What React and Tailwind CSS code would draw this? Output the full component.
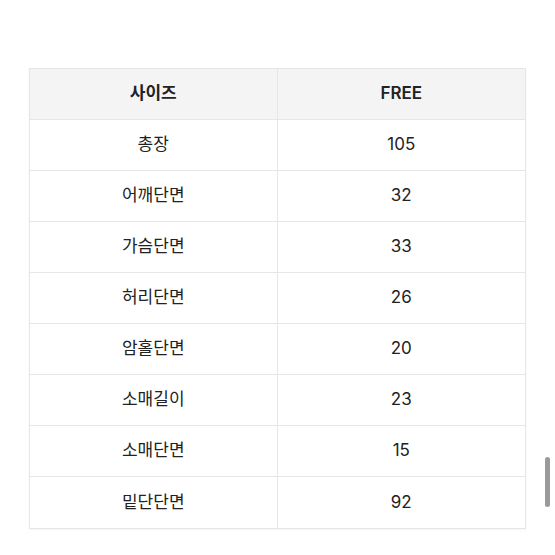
const rows = [
  ['총장', '105'],
  ['어깨단면', '32'],
  ['가슴단면', '33'],
  ['허리단면', '26'],
  ['암홀단면', '20'],
  ['소매길이', '23'],
  ['소매단면', '15'],
  ['밑단단면', '92'],
];

export default function App() {
  return (
    <div
      className="relative w-[555px] h-[555px] bg-white overflow-hidden text-[#222]"
      style={{ fontFamily: 'Inter, "Noto Sans CJK KR", sans-serif' }}
    >
      <div className="pt-[68px] px-[29px]">
        <div className="border border-[#e6e6e6] shadow-[0_1px_2px_rgba(0,0,0,0.04)]">
          <div className="grid grid-cols-2 h-[51px] bg-[#f4f4f4] border-b border-[#e6e6e6] text-[17px] font-semibold">
            <div className="flex items-center justify-center border-r border-[#e6e6e6]">사이즈</div>
            <div className="flex items-center justify-center">FREE</div>
          </div>
          {rows.map(([label, value], i) => (
            <div
              key={label}
              className={`grid grid-cols-2 h-[51px] text-[17px] ${i < rows.length - 1 ? 'border-b border-[#e6e6e6]' : ''}`}
            >
              <div className="flex items-center justify-center border-r border-[#e6e6e6]">{label}</div>
              <div className="flex items-center justify-center">{value}</div>
            </div>
          ))}
        </div>
      </div>
      <div className="absolute left-[545px] top-[457px] w-[5px] h-[50px] rounded-full bg-[#9a9a9a]" />
    </div>
  );
}
